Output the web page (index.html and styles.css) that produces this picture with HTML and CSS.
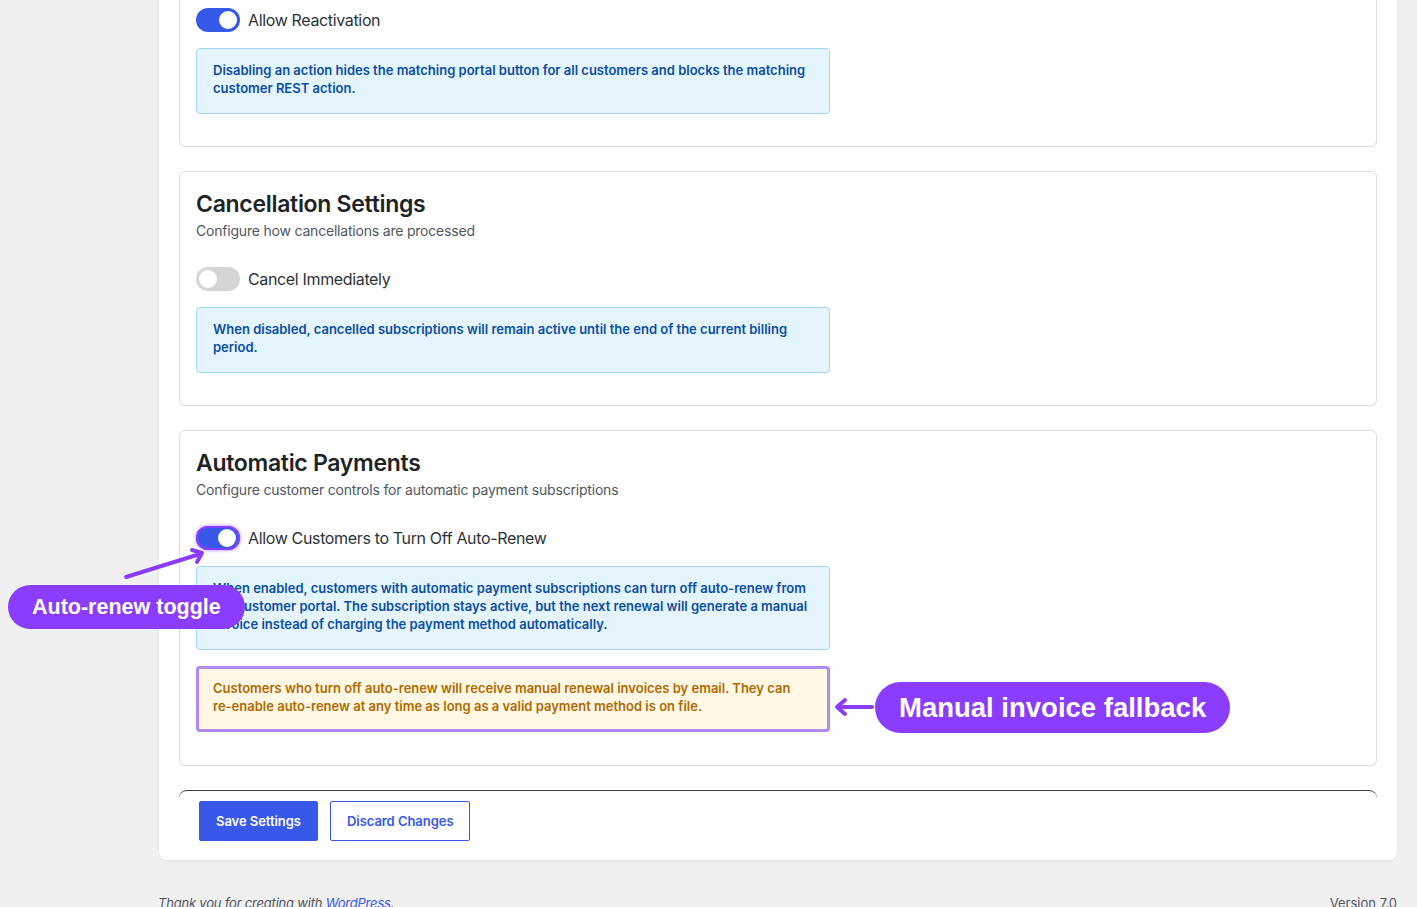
FILE: index.html
```html
<!DOCTYPE html>
<html lang="en">
    <head>
        <meta charset="UTF-8">
        <meta name="viewport" content="width=device-width, initial-scale=1.0">
        <title>Subscription Settings</title>
        <link rel="stylesheet" href="styles.css">
    </head>
<body>
    <div class="page">
        <div class="panel">
            <section class="card">
                <label class="switch-row">
                    <span class="switch on"></span>
                    <span class="switch-label">Allow Reactivation</span>
                </label>
                <div class="notice info">Disabling an action hides the matching portal button for all customers and blocks the matching customer REST action.</div>
            </section>

            <section class="card">
                <h2 class="card-title">Cancellation Settings</h2>
                <p class="card-desc">Configure how cancellations are processed</p>
                <label class="switch-row">
                    <span class="switch"></span>
                    <span class="switch-label">Cancel Immediately</span>
                </label>
                <div class="notice info">When disabled, cancelled subscriptions will remain active until the end of the current billing period.</div>
            </section>

            <section class="card">
                <h2 class="card-title">Automatic Payments</h2>
                <p class="card-desc">Configure customer controls for automatic payment subscriptions</p>
                <label class="switch-row">
                    <span class="switch on marked"></span>
                    <span class="switch-label">Allow Customers to Turn Off Auto-Renew</span>
                </label>
                <div class="notice info">When enabled, customers with automatic payment subscriptions can turn off auto-renew from the customer portal. The subscription stays active, but the next renewal will generate a manual invoice instead of charging the payment method automatically.</div>
                <div class="notice warn marked">Customers who turn off auto-renew will receive manual renewal invoices by email. They can <span class="nowrap">re-enable</span> auto-renew at any time as long as a valid payment method is on file.</div>
            </section>

            <div class="actions">
                <button class="btn primary">Save Settings</button>
                <button class="btn secondary">Discard Changes</button>
            </div>
        </div>

        <footer class="admin-footer">
            <span class="thanks">Thank you for creating with <a href="#">WordPress</a>.</span>
            <span class="version">Version 7.0</span>
        </footer>
    </div>

    <!-- annotation layer -->
    <div class="callout callout-toggle">Auto-renew toggle</div>
    <div class="callout callout-fallback">Manual invoice fallback</div>
    <svg class="arrows" width="1417" height="907" viewBox="0 0 1417 907">
        <g fill="none" stroke="#8b3dff" stroke-width="4" stroke-linecap="round" stroke-linejoin="round">
            <path d="M126 577 L200 554"/>
            <path d="M192 550 L202 553 L197 562"/>
            <path d="M872 707 L838 707"/>
            <path d="M845 700 L837 707 L845 714"/>
        </g>
    </svg>
</body>
</html>
```

FILE: styles.css
```css
body {
    margin: 0;
    height: 907px;
    overflow: hidden;
    background-color: #f0f0f1;
    font-family: Inter, "Noto Sans", sans-serif;
    color: #1d2327;
    position: relative;
}

.page {
    padding-left: 159px;
    padding-right: 20px;
}

.panel {
    margin-top: -29px;
    padding: 20px 20px 19px;
    background-color: #fff;
    border-radius: 8px;
    box-shadow: 0 1px 3px rgba(0, 0, 0, .06);
}

.card {
    border: 1px solid #dcdcde;
    border-radius: 6px;
    padding: 16px 16px 32px;
    margin-bottom: 24px;
}

.card:last-of-type {
    padding-bottom: 33px;
}

.card-title {
    margin: 0;
    font-size: 23px;
    line-height: 33px;
    font-weight: 600;
    color: #1d2327;
    letter-spacing: -0.3px;
}

.card-desc {
    margin: 0 0 26px;
    font-size: 14px;
    line-height: 20px;
    color: #50575e;
    letter-spacing: -0.2px;
}

.switch-row {
    display: flex;
    align-items: center;
    gap: 8px;
    margin-bottom: 16px;
    cursor: pointer;
}

.switch {
    width: 44px;
    height: 24px;
    border-radius: 12px;
    background-color: #d5d5d7;
    position: relative;
    flex-shrink: 0;
}

.switch::before {
    content: '';
    position: absolute;
    top: 3px;
    left: 3px;
    width: 18px;
    height: 18px;
    border-radius: 50%;
    background-color: #fff;
}

.switch.on {
    background-color: #3858e9;
}

.switch.on::before {
    left: 23px;
}

.switch.marked {
    box-shadow: inset 0 0 0 2px rgba(139, 61, 255, .9), 0 0 3px 1px rgba(139, 61, 255, .45);
}

.switch.marked::before {
    left: 22px;
}

.switch-label {
    font-size: 16px;
    line-height: 24px;
    color: #2c3338;
    letter-spacing: -0.35px;
}

.notice {
    box-sizing: border-box;
    width: 634px;
    padding: 12px 16px 16px;
    border: 1px solid #9fd5f9;
    border-radius: 4px;
    font-size: 13px;
    line-height: 18px;
    font-weight: 600;
}

.notice.info {
    background-color: #e5f5fe;
    color: #0a4ea3;
}

.notice.warn {
    margin-top: 16px;
    background-color: #fff8e5;
    border-color: #f2d27a;
    color: #b06a00;
}

.notice.marked {
    outline: 3px solid rgba(170, 125, 245, .9);
    outline-offset: -3px;
}

.nowrap {
    white-space: nowrap;
}

.actions {
    display: flex;
    gap: 12px;
    padding: 10px 20px 0;
    border-top: 1px solid #3c434a;
    border-radius: 8px 8px 0 0;
}

.btn {
    height: 40px;
    padding: 0 16px;
    border-radius: 2px;
    font-family: Inter, "Noto Sans", sans-serif;
    font-size: 13px;
    font-weight: 600;
    letter-spacing: -0.05px;
    cursor: pointer;
}

.btn.primary {
    background-color: #3858e9;
    border: 1px solid #3858e9;
    color: #fff;
}

.btn.secondary {
    background-color: #fff;
    border: 1px solid #3858e9;
    color: #3858e9;
}

.admin-footer {
    display: flex;
    justify-content: space-between;
    padding-top: 34px;
    margin-left: -1px;
    font-size: 13px;
    line-height: 18px;
    color: #50575e;
}

.thanks {
    font-style: italic;
    letter-spacing: -0.2px;
}

.thanks a {
    color: #3858e9;
}

.callout {
    position: absolute;
    background-color: #8b3dff;
    color: #fff;
    font-family: "Liberation Sans", Arial, sans-serif;
    font-weight: 700;
    border-radius: 999px;
    white-space: nowrap;
}

.callout-toggle {
    left: 8px;
    top: 585px;
    height: 44px;
    line-height: 44px;
    padding: 0 24px;
    font-size: 21.5px;
}

.callout-fallback {
    left: 875px;
    top: 682px;
    height: 51px;
    line-height: 51px;
    padding: 0 24px;
    font-size: 27.5px;
}

.arrows {
    position: absolute;
    left: 0;
    top: 0;
    pointer-events: none;
}
```
